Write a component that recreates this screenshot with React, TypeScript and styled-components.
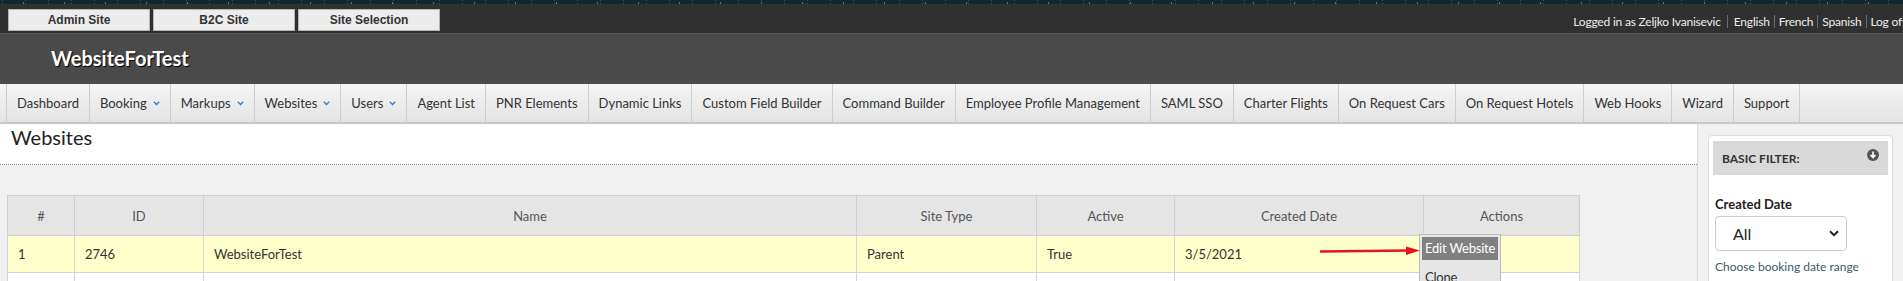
import React from 'react';
import styled, { createGlobalStyle } from 'styled-components';

const GlobalStyle = createGlobalStyle`
  html, body {
    margin: 0;
    padding: 0;
  }
  body {
    font-family: Lato, 'Open Sans', sans-serif;
    background: #f1f1f1;
    overflow: hidden;
  }
  * {
    box-sizing: border-box;
  }
`;

const Starfield = styled.div`
  height: 4px;
  background-color: #11292c;
  background-image: radial-gradient(circle, #4f7b7b 0 0.7px, transparent 1px),
    radial-gradient(circle, #2f5656 0 0.6px, transparent 1px);
  background-size: 41px 4px, 23px 4px;
  background-position: 3px 1px, 14px 2px;
`;

const TopBar = styled.div`
  display: flex;
  justify-content: space-between;
  height: 30px;
  padding: 5px 0 0 8px;
  background: #303030;
  border-bottom: 1px solid #575757;
  overflow: hidden;
`;

const SiteButtons = styled.div`
  display: flex;
  gap: 3px;
`;

const SiteButton = styled.button`
  width: 142px;
  height: 22px;
  padding: 0;
  background: #ececec;
  border: 1px solid #b3b3b3;
  font: bold 12px 'Liberation Sans', Arial, sans-serif;
  color: #333;
`;

const UserLinks = styled.div`
  display: flex;
  align-items: center;
  height: 22px;
  margin-right: -3px;
  padding-top: 2px;
  color: #eeeeee;
  font-size: 12px;
  letter-spacing: -0.2px;
  white-space: nowrap;
`;

const Divider = styled.span<{ $wide?: boolean }>`
  width: 1px;
  height: 13px;
  background: #6d6d6d;
  margin: 0 ${p => (p.$wide ? 6 : 4)}px;
`;

const Header = styled.div`
  display: flex;
  align-items: center;
  height: 50px;
  padding: 0 0 2px 51px;
  background: #4a4a4a;
  color: #fff;
  font-weight: 700;
  font-size: 20px;
  text-shadow: 1px 1px 1px #000;
`;

const Nav = styled.nav`
  display: flex;
  height: 40px;
  padding-left: 6px;
  background: linear-gradient(#f5f5f5, #e3e3e3);
  border-bottom: 2px solid #c8c8c8;
`;

const NavItem = styled.div`
  display: flex;
  align-items: center;
  gap: 6px;
  padding: 0 10px;
  border-left: 1px solid #cdcdcd;
  font-size: 13px;
  color: #333;
  white-space: nowrap;
  &:last-child {
    border-right: 1px solid #cdcdcd;
  }
`;

const Chevron = () => (
  <svg width="7" height="5" viewBox="0 0 7 5">
    <path d="M0.8 0.8 L3.5 3.6 L6.2 0.8" fill="none" stroke="#2f7fd0" strokeWidth="1.4" />
  </svg>
);

const Body = styled.div`
  display: flex;
  height: 160px;
`;

const Main = styled.div`
  flex: 1;
  min-width: 0;
`;

const TitleBar = styled.div`
  height: 41px;
  padding: 1px 11px 0;
  background: #fff;
  border-bottom: 1px dotted #8a8a8a;
`;

const PageTitle = styled.h1`
  margin: 0;
  font-size: 20px;
  line-height: 24px;
  font-weight: 400;
  color: #222;
`;

const TableArea = styled.div`
  position: relative;
  padding: 30px 0 0 7px;
`;

const Table = styled.table`
  width: 1572px;
  border-collapse: collapse;
  table-layout: fixed;
  background: #fff;
  font-size: 13px;
`;

const HeadCell = styled.th`
  height: 40px;
  padding: 0 10px;
  border: 1px solid #cfcfcf;
  background: #e5e5e5;
  color: #555;
  font-weight: 400;
  text-align: center;
`;

const Row = styled.tr<{ $highlight?: boolean }>`
  background: ${p => (p.$highlight ? '#ffffcc' : '#fff')};
`;

const Cell = styled.td`
  position: relative;
  height: 37px;
  padding: 0 10px;
  border: 1px solid #d4d4d4;
  color: #333;
`;

const ActionMenu = styled.div`
  position: absolute;
  left: -5px;
  top: -2px;
  width: max-content;
  min-width: 79px;
  padding: 2px;
  background: #e6e6e6;
  border: 1px solid #bbbbbb;
  z-index: 2;
`;

const MenuItem = styled.div<{ $active?: boolean }>`
  height: 23px;
  margin-bottom: 6px;
  padding: 0 3px;
  line-height: 23px;
  font-size: 13px;
  letter-spacing: -0.2px;
  white-space: nowrap;
  background: ${p => (p.$active ? '#808080' : 'transparent')};
  color: ${p => (p.$active ? '#fff' : '#333')};
`;

const Arrow = styled.svg`
  position: absolute;
  left: 1320px;
  top: 81px;
  z-index: 3;
`;

const Sidebar = styled.aside`
  width: 206px;
  padding: 11px 10px 0 10px;
  border-left: 1px solid #dadada;
  background: #f1f1f1;
`;

const FilterCard = styled.div`
  height: 160px;
  padding: 5px 4px;
  background: #fff;
  border: 1px solid #dcdcdc;
  border-radius: 4px;
`;

const FilterHeader = styled.div`
  display: flex;
  justify-content: space-between;
  align-items: center;
  height: 34px;
  padding: 0 9px;
  background: #d9d9d9;
  font-size: 12px;
  font-weight: 700;
  color: #333;
`;

const CollapseIcon = styled.svg`
  align-self: flex-start;
  margin-top: 8px;
`;

const FilterBody = styled.div`
  padding: 21px 2px 0;
`;

const FieldLabel = styled.div`
  margin-bottom: 4px;
  font-size: 13px;
  line-height: 16px;
  font-weight: 700;
  color: #222;
`;

const SelectBox = styled.div`
  display: flex;
  align-items: center;
  justify-content: space-between;
  width: 132px;
  height: 35px;
  padding: 0 7px 0 17px;
  border: 1px solid #cccccc;
  border-radius: 4px;
  font-size: 16px;
  color: #222;
`;

const HelpText = styled.div`
  margin-top: 8px;
  font-size: 12px;
  line-height: 15px;
  color: #3d5a6b;
`;

const navItems: Array<{ label: string; menu?: boolean }> = [
  { label: 'Dashboard' },
  { label: 'Booking', menu: true },
  { label: 'Markups', menu: true },
  { label: 'Websites', menu: true },
  { label: 'Users', menu: true },
  { label: 'Agent List' },
  { label: 'PNR Elements' },
  { label: 'Dynamic Links' },
  { label: 'Custom Field Builder' },
  { label: 'Command Builder' },
  { label: 'Employee Profile Management' },
  { label: 'SAML SSO' },
  { label: 'Charter Flights' },
  { label: 'On Request Cars' },
  { label: 'On Request Hotels' },
  { label: 'Web Hooks' },
  { label: 'Wizard' },
  { label: 'Support' },
];

const columns = [
  { title: '#', width: 67 },
  { title: 'ID', width: 129 },
  { title: 'Name', width: 653 },
  { title: 'Site Type', width: 180 },
  { title: 'Active', width: 138 },
  { title: 'Created Date', width: 249 },
  { title: 'Actions', width: 156 },
];

export default function App() {
  return (
    <>
      <GlobalStyle />
      <Starfield />
      <TopBar>
        <SiteButtons>
          <SiteButton type="button">Admin Site</SiteButton>
          <SiteButton type="button">B2C Site</SiteButton>
          <SiteButton type="button">Site Selection</SiteButton>
        </SiteButtons>
        <UserLinks>
          <span>Logged in as Zeljko Ivanisevic</span>
          <Divider $wide />
          <span>English</span>
          <Divider />
          <span>French</span>
          <Divider />
          <span>Spanish</span>
          <Divider />
          <span>Log off</span>
        </UserLinks>
      </TopBar>
      <Header>WebsiteForTest</Header>
      <Nav>
        {navItems.map(item => (
          <NavItem key={item.label}>
            {item.label}
            {item.menu && <Chevron />}
          </NavItem>
        ))}
      </Nav>

      <Body>
        <Main>
          <TitleBar>
            <PageTitle>Websites</PageTitle>
          </TitleBar>
          <TableArea>
            <Table>
              <colgroup>
                {columns.map(c => (
                  <col key={c.title} style={{ width: c.width }} />
                ))}
              </colgroup>
              <thead>
                <tr>
                  {columns.map(c => (
                    <HeadCell key={c.title}>{c.title}</HeadCell>
                  ))}
                </tr>
              </thead>
              <tbody>
                <Row $highlight>
                  <Cell>1</Cell>
                  <Cell>2746</Cell>
                  <Cell>WebsiteForTest</Cell>
                  <Cell>Parent</Cell>
                  <Cell>True</Cell>
                  <Cell>3/5/2021</Cell>
                  <Cell>
                    <ActionMenu>
                      <MenuItem $active>Edit Website</MenuItem>
                      <MenuItem>Clone</MenuItem>
                    </ActionMenu>
                  </Cell>
                </Row>
                <Row>
                  <Cell />
                  <Cell />
                  <Cell />
                  <Cell />
                  <Cell />
                  <Cell />
                  <Cell />
                </Row>
              </tbody>
            </Table>
            <Arrow width="100" height="10" viewBox="0 0 100 10">
              <line x1="0" y1="5.5" x2="88" y2="4.5" stroke="#e8141b" strokeWidth="2.6" />
              <polygon points="86,0.5 100,4.5 86,9" fill="#e8141b" />
            </Arrow>
          </TableArea>
        </Main>

        <Sidebar>
          <FilterCard>
            <FilterHeader>
              <span>BASIC FILTER:</span>
              <CollapseIcon width="12" height="12" viewBox="0 0 12 12">
                <circle cx="6" cy="6" r="6" fill="#555" />
                <path d="M6 2.6 V8.2 M3.6 6 L6 8.6 L8.4 6" fill="none" stroke="#fff" strokeWidth="1.6" />
              </CollapseIcon>
            </FilterHeader>
            <FilterBody>
              <FieldLabel>Created Date</FieldLabel>
              <SelectBox>
                <span>All</span>
                <svg width="10" height="7" viewBox="0 0 10 7">
                  <path d="M1 1.2 L5 5.2 L9 1.2" fill="none" stroke="#222" strokeWidth="2" />
                </svg>
              </SelectBox>
              <HelpText>Choose booking date range</HelpText>
            </FilterBody>
          </FilterCard>
        </Sidebar>
      </Body>
    </>
  );
}
